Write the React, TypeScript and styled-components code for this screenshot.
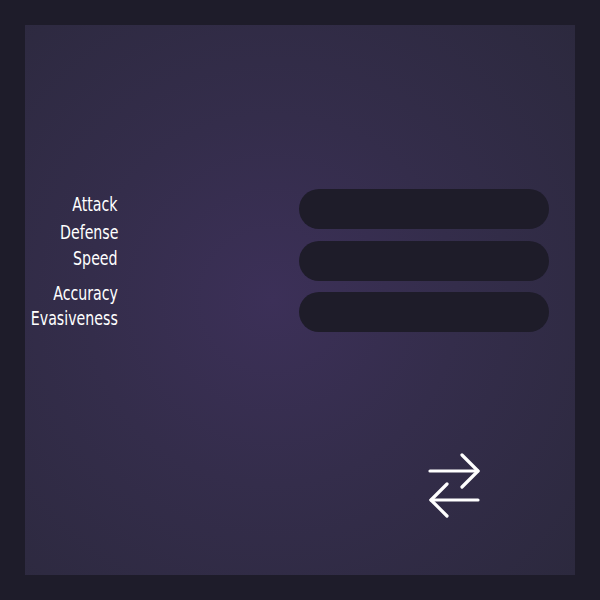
import styled, { createGlobalStyle } from "styled-components";

const Global = createGlobalStyle`
  html, body {
    margin: 0;
    padding: 0;
    background: #1e1c2a;
  }
`;

const Screen = styled.div`
  width: 600px;
  height: 600px;
  padding: 25px;
  box-sizing: border-box;
  background: #1e1c2a;
`;

const Panel = styled.div`
  width: 550px;
  height: 550px;
  box-sizing: border-box;
  padding: 164px 26px 0 0;
  display: flex;
  flex-direction: column;
  background: radial-gradient(
    circle at 45% 50%,
    #3c3058 0%,
    #342d4b 45%,
    #2c293e 100%
  );
`;

const StatsRow = styled.div`
  display: flex;
  align-items: flex-start;
  justify-content: space-between;
`;

const Labels = styled.div`
  width: 93px;
  padding-top: 3px;
  display: flex;
  flex-direction: column;
  align-items: flex-end;
`;

// narrow face: condensed sans squeezed a bit further
const Label = styled.div<{ $gap: number }>`
  margin-top: ${(p) => p.$gap}px;
  font-family: "DejaVu Sans Condensed", "Liberation Sans", sans-serif;
  font-size: 19px;
  line-height: 25px;
  color: #ffffff;
  white-space: nowrap;
  transform: scaleX(0.83);
  transform-origin: right center;
`;

const Bars = styled.div`
  width: 250px;
  display: flex;
  flex-direction: column;
  gap: 11.5px;
`;

const Bar = styled.div`
  height: 40px;
  border-radius: 20px;
  background: #1e1c29;
`;

const Footer = styled.div`
  display: flex;
  justify-content: flex-end;
  padding: 121px 67px 0 0;
`;

const SwapButton = styled.button`
  border: 0;
  padding: 0;
  background: transparent;
  display: flex;
  cursor: pointer;
`;

const labels: [string, number][] = [
  ["Attack", 0],
  ["Defense", 3],
  ["Speed", 1],
  ["Accuracy", 10],
  ["Evasiveness", 0],
];

export default function App() {
  return (
    <>
      <Global />
      <Screen>
        <Panel>
          <StatsRow>
            <Labels>
              {labels.map(([text, gap]) => (
                <Label key={text} $gap={gap}>
                  {text}
                </Label>
              ))}
            </Labels>
            <Bars>
              <Bar />
              <Bar />
              <Bar />
            </Bars>
          </StatsRow>
          <Footer>
            <SwapButton aria-label="swap">
              <svg width="54" height="68" viewBox="0 0 54 68" fill="none" stroke="#ffffff" strokeWidth="3.2" strokeLinecap="round" strokeLinejoin="round">
                <path d="M2 18H50" />
                <path d="M34 2L50 18L34 34" />
                <path d="M50 47H3" />
                <path d="M19 31L3 47L19 63" />
              </svg>
            </SwapButton>
          </Footer>
        </Panel>
      </Screen>
    </>
  );
}
